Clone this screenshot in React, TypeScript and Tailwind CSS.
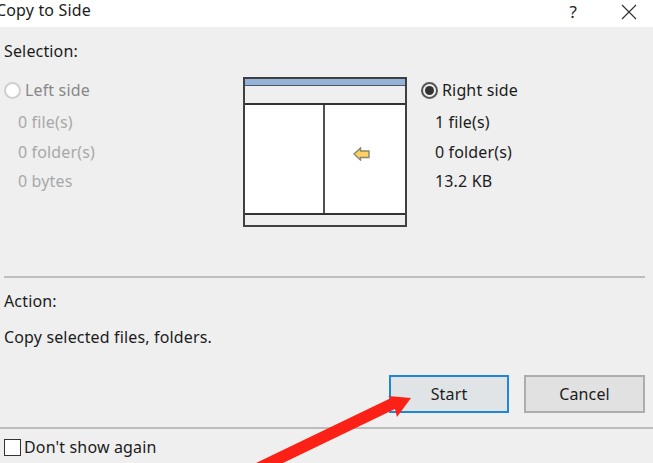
const sans = "font-['Noto_Sans','Open_Sans',sans-serif]";

const LeftRows = ["0 file(s)", "0 folder(s)", "0 bytes"];
const RightRows = ["1 file(s)", "0 folder(s)", "13.2 KB"];

const StatRows = ({ rows, color }: { rows: string[]; color: string }) => (
  <div className={`mt-[10px] ml-[14px] flex flex-col gap-[7.5px] ${color}`}>
    {rows.map((row) => (
      <div key={row} className="h-[22px] leading-[22px]">
        {row}
      </div>
    ))}
  </div>
);

const Diagram = () => (
  <div className="w-[164px] h-[150px] mt-[15px] border-2 border-[#404040] bg-[#efefef] flex flex-col">
    <div className="h-[7px] bg-[#95b3d7] border-b border-[#4a5a6c]" />
    <div className="h-[19px] border-b-2 border-[#333333]" />
    <div className="h-[110px] flex bg-white border-b-2 border-[#333333]">
      <div className="w-[80px] border-r-2 border-[#505050]" />
      <div className="flex-1 flex items-center justify-center pb-[10px] pr-[8px]">
        <svg width="17" height="14" viewBox="0 0 17 14">
          <path
            d="M1 7 L7.5 1 V4 H16 V10.5 H7.5 V13 Z"
            fill="#fbd25f"
            stroke="#8a8474"
            strokeWidth="1.4"
          />
        </svg>
      </div>
    </div>
  </div>
);

export default function App() {
  return (
    <div
      className={`relative w-[653px] h-[463px] overflow-hidden bg-[#efefef] text-[16px] tracking-[0.15px] text-[#1c1c1c] ${sans}`}
    >
      <div className="h-[27px] bg-white flex items-center justify-between">
        <span className="-ml-[4px] -mt-[7px]">Copy to Side</span>
        <div className="flex items-center gap-[44px] pr-[16px] -mt-[4px]">
          <span className="text-[17px]">?</span>
          <svg width="16" height="16" viewBox="0 0 16 16">
            <path d="M1 1 L15 15 M15 1 L1 15" stroke="#333" strokeWidth="1.2" />
          </svg>
        </div>
      </div>

      <div className="px-[4px] pt-[13px] h-[249px]">
        <div className="h-[22px] leading-[22px]">Selection:</div>
        <div className="flex">
          <div className="w-[239px]">
            <label className="flex items-center gap-[4px] mt-[17px] h-[22px] text-[#888888]">
              <span className="w-[17px] h-[17px] rounded-full bg-white border-2 border-[#cfcfcf]" />
              Left side
            </label>
            <StatRows rows={LeftRows} color="text-[#a8a8a8]" />
          </div>
          <Diagram />
          <div className="ml-[14px]">
            <label className="flex items-center gap-[4px] mt-[17px] h-[22px]">
              <span className="w-[17px] h-[17px] rounded-full border-2 border-[#555555] flex items-center justify-center">
                <span className="w-[9px] h-[9px] rounded-full bg-[#333333]" />
              </span>
              Right side
            </label>
            <StatRows rows={RightRows} color="text-[#1c1c1c]" />
          </div>
        </div>
      </div>

      <div className="h-[2px] ml-[4px] w-[641px] bg-[#bdbdbd]" />

      <div className="px-[4px] pt-[12px] h-[149px] flex flex-col">
        <div className="h-[22px] leading-[22px]">Action:</div>
        <div className="h-[22px] leading-[22px] mt-[14px]">Copy selected files, folders.</div>
        <div className="flex justify-end gap-[15px] mt-[27px] pr-[4px]">
          <button className="w-[120px] h-[38px] bg-[#e1e4e7] border-2 border-[#1f86d8]">Start</button>
          <button className="w-[121px] h-[38px] bg-[#e1e1e1] border-2 border-[#adadad]">Cancel</button>
        </div>
      </div>

      <div className="h-[36px] border-t-2 border-[#bdbdbd] px-[4px] pt-[2px] flex items-center gap-[3px]">
        <span className="w-[17px] h-[17px] bg-white border border-[#333333]" />
        <span>Don't show again</span>
      </div>

      {/* red annotation drawn over the dialog */}
      <svg className="absolute left-0 top-0" width="653" height="463" viewBox="0 0 653 463">
        <polygon
          points="411,398 397,417 395,409 283,463 256,463 391,398 388,396"
          fill="#fb2116"
        />
      </svg>
    </div>
  );
}
